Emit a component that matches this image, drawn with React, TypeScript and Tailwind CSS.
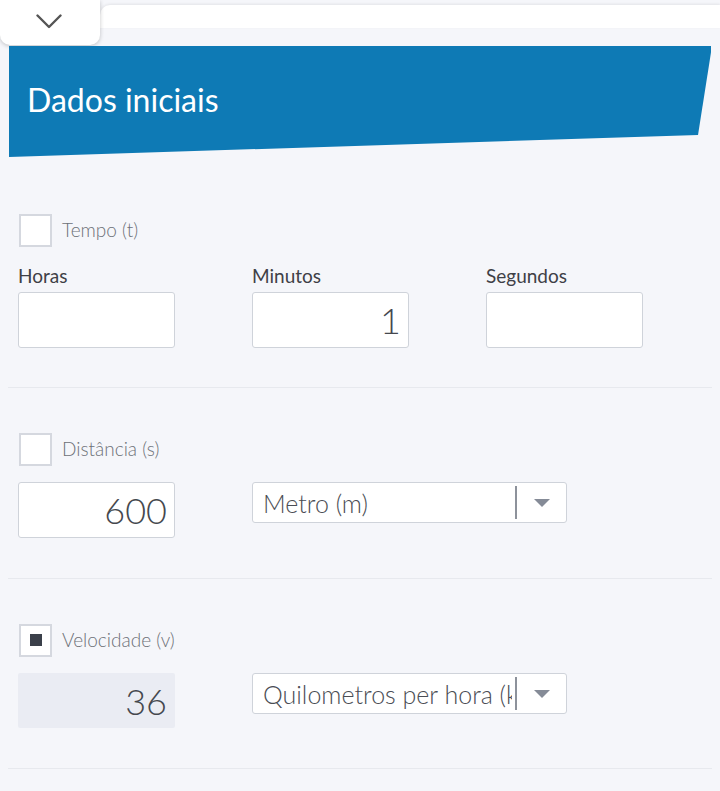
const Checkbox = ({ checked, label }: { checked?: boolean; label: string }) => (
  <label className="flex items-center gap-[10px] h-[32px] ml-[1px]">
    <span className="w-[33px] h-[33px] border-2 border-[#d5d8df] bg-white flex items-center justify-center">
      {checked && <span className="w-[12px] h-[12px] bg-[#3b404a]" />}
    </span>
    <span className="text-[19px] font-light text-[#6d7178] leading-[24px]">{label}</span>
  </label>
)

const NumberBox = ({ value, disabled }: { value: string; disabled?: boolean }) => (
  <input
    type="text"
    readOnly
    value={value}
    className={
      disabled
        ? "w-[157px] h-[55px] rounded-[2px] bg-[#eaecf3] text-right pr-[8px] text-[36px] font-light text-[#45484e] outline-none"
        : "w-[157px] h-[56px] border border-[#cfd3da] rounded-[3px] bg-white text-right pr-[7px] text-[36px] font-light text-[#45484e] outline-none"
    }
  />
)

const UnitSelect = ({ value }: { value: string }) => (
  <div className="w-[315px] h-[41px] border border-[#cfd3da] rounded-[3px] bg-white flex items-center">
    <div className="w-[262px] pl-[10px] pr-[3px]">
      <div className="overflow-hidden whitespace-nowrap text-[25px] font-light text-[#4a4d54] leading-[32px]">
        {value}
      </div>
    </div>
    <span className="w-[2px] h-[33px] bg-[#8d929b]" />
    <div className="flex-1 flex items-center justify-center">
      <span className="w-0 h-0 border-l-[8px] border-r-[8px] border-t-[8px] border-l-transparent border-r-transparent border-t-[#858b97]" />
    </div>
  </div>
)

export default function App() {
  return (
    <div className="w-[720px] h-[791px] overflow-hidden bg-[#f5f6fa] font-['Lato',sans-serif]">
      <header className="relative h-[46px] bg-[#f5f6fa]">
        <div className="ml-[100px] pt-[5px]">
          <div className="h-[23px] bg-white rounded-tl-[10px] shadow-[0_-1px_3px_rgba(0,0,0,0.08)]" />
        </div>
        <button className="absolute left-0 top-0 w-[100px] h-[45px] bg-white rounded-b-[10px] shadow-[0_1px_4px_rgba(0,0,0,0.22)] flex items-center justify-center">
          <svg width="26" height="15" viewBox="0 0 26 15" fill="none" className="-mt-[3px] -ml-[3px]">
            <polyline points="1.5,1.5 13,13 24.5,1.5" stroke="#555" strokeWidth="2.4" strokeLinecap="round" strokeLinejoin="round" />
          </svg>
        </button>
      </header>

      <div className="mx-[9px] h-[111px] bg-[#0e7ab5] [clip-path:polygon(0_0,703px_0,689px_89px,0_100%)] pl-[18px] pt-[38px]">
        <h1 className="text-[32px] leading-none text-white">Dados iniciais</h1>
      </div>

      <div className="mx-[8px]">
        <section className="pl-[10px] pt-[57px] pb-[39px] border-b border-[#e7e9ee]">
          <Checkbox label="Tempo (t)" />
          <div className="grid grid-cols-[157px_157px_157px] gap-x-[77px] mt-[18px]">
            {[
              ["Horas", ""],
              ["Minutos", "1"],
              ["Segundos", ""],
            ].map(([label, value]) => (
              <div key={label} className="flex flex-col gap-[4px]">
                <span className="text-[19px] leading-[24px] text-[#3e4046]">{label}</span>
                <NumberBox value={value} />
              </div>
            ))}
          </div>
        </section>

        <section className="pl-[10px] pt-[45px] pb-[40px] border-b border-[#e7e9ee]">
          <Checkbox label="Distância (s)" />
          <div className="flex items-start gap-[77px] mt-[17px]">
            <NumberBox value="600" />
            <UnitSelect value="Metro (m)" />
          </div>
        </section>

        <section className="pl-[10px] pt-[45px] pb-[40px] border-b border-[#e7e9ee]">
          <Checkbox checked label="Velocidade (v)" />
          <div className="flex items-start gap-[77px] mt-[17px]">
            <NumberBox value="36" disabled />
            <UnitSelect value="Quilometros per hora (km/h)" />
          </div>
        </section>
      </div>
    </div>
  )
}
